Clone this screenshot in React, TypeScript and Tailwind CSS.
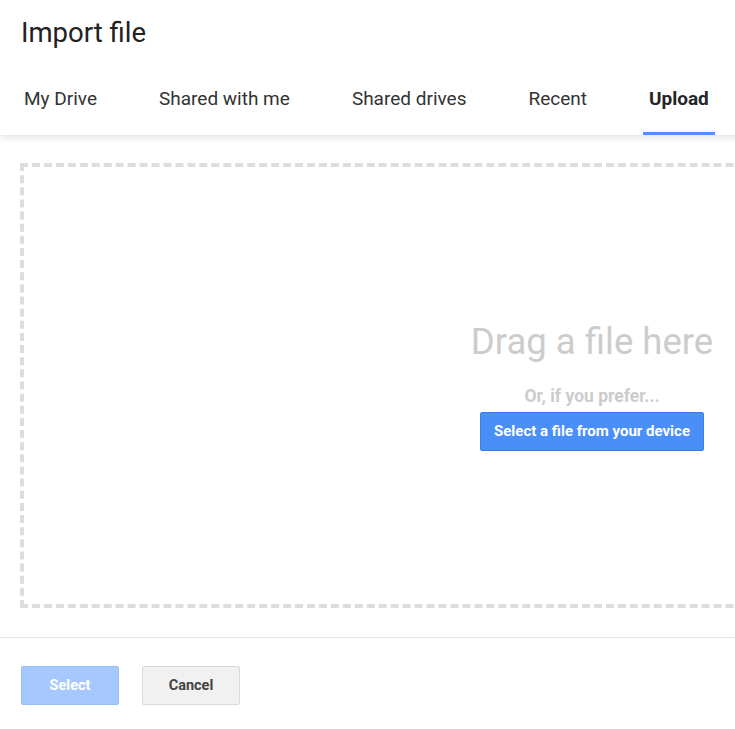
import React from "react";

const tabs = ["My Drive", "Shared with me", "Shared drives", "Recent", "Upload"];

export default function App() {
  return (
    <div
      className="w-[735px] h-[729px] overflow-hidden bg-white"
      style={{ fontFamily: "Roboto, 'Noto Sans', sans-serif" }}
    >
      <div className="w-[1184px]">
        {/* Header */}
        <div className="relative z-10 bg-white shadow-[0_2px_8px_rgba(0,0,0,0.13)]">
          <div className="pl-[21px] pt-[17px] text-[27.5px] leading-[32px] text-[#222]">
            Import file
          </div>
          <div className="flex pl-[18px] pt-[38px] gap-[50px]">
            {tabs.map((t) => {
              const active = t === "Upload";
              return (
                <div key={t} className="flex flex-col">
                  <div
                    className={
                      "px-[6px] text-[19px] leading-[24px] pb-[21px] " +
                      (active ? "font-bold text-[#262626]" : "text-[#333]")
                    }
                  >
                    {t}
                  </div>
                  <div className={"h-[3px] " + (active ? "bg-[#4d90fe]" : "bg-transparent")} />
                </div>
              );
            })}
          </div>
        </div>

        {/* Body */}
        <div className="pt-[28px] px-[20px]">
          <div className="h-[445px] border-4 border-dashed border-[#dddddd] flex flex-col items-center justify-center">
            <div className="text-[36.5px] leading-[44px] text-[#cccccc]">Drag a file here</div>
            <div className="mt-[22px] text-[17.5px] leading-[20px] font-bold text-[#cccccc]">
              Or, if you prefer...
            </div>
            <button className="mt-[6px] h-[39px] px-[13px] rounded-[2px] bg-[#4a8ef8] border border-[#3b7ce6] text-white text-[15px] font-bold">
              Select a file from your device
            </button>
          </div>
        </div>

        <div className="mt-[29px] h-px bg-[#e5e5e5]" />

        <div className="flex gap-[23px] pl-[21px] pt-[28px]">
          <button className="w-[98px] h-[39px] rounded-[2px] bg-[#a6c8ff] border border-[#98bdf7] text-white text-[14.5px] font-bold">
            Select
          </button>
          <button className="w-[98px] h-[39px] rounded-[2px] bg-[#f1f1f1] border border-[#d9d9d9] text-[#444] text-[14.5px] font-bold">
            Cancel
          </button>
        </div>
      </div>
    </div>
  );
}
